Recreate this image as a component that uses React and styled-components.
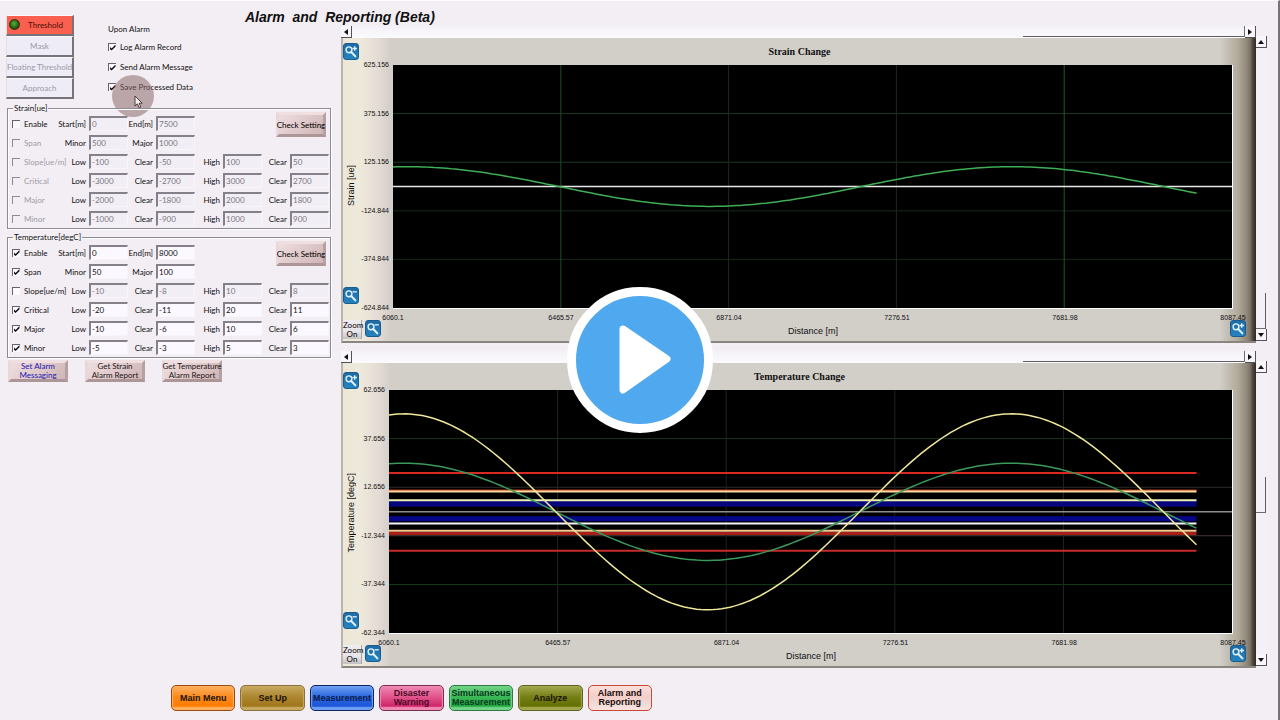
import React from "react";
import styled, { createGlobalStyle, css } from "styled-components";

const GlobalStyle = createGlobalStyle`
  *, *::before, *::after { box-sizing: border-box; }
  body { margin: 0; background: #f3edf4; color: #111; }
  body, button, input { font-family: Lato, "Liberation Sans", Arial, sans-serif; font-size: 8px; }
  button { cursor: pointer; }
`;

/* ---------- page frame ---------- */

const Page = styled.div`
  position: relative;
  min-height: 100vh;
  border-top: 1px solid #fff;
  border-right: 2px solid #77717a;
  padding-right: 10px;
`;

const Main = styled.main`
  display: grid;
  grid-template-columns: 341px minmax(0, 1fr);
  grid-template-rows: 25px auto;
`;

const PageTitle = styled.h1`
  grid-area: 1 / 1 / 2 / 3;
  margin: 0;
  padding: 6px 0 0 245px;
  font: italic bold 14px/20px "Liberation Sans", Arial, sans-serif;
  white-space: pre;
`;

const Sidebar = styled.aside`
  grid-area: 1 / 1 / 3 / 2;
  padding: 14px 10px 0 6px;
`;

const Charts = styled.section`
  grid-area: 2 / 2 / 3 / 3;
  display: flex;
  flex-direction: column;
  gap: 8px;
`;

/* ---------- sidebar ---------- */

const TopBlock = styled.div`
  display: flex;
  gap: 34px;
  position: relative;
`;

const Modes = styled.div`
  display: flex;
  flex-direction: column;
  width: 68px;
`;

const ModeButton = styled.button`
  display: flex;
  align-items: center;
  justify-content: center;
  position: relative;
  height: 21px;
  padding: 0;
  border: solid;
  border-width: 1px 2px 2px 1px;
  border-color: #fbf8fc #77737a #77737a #e4dfe8;
  background: ${(p) => (p.$active ? "#f9604f" : "#eeedf7")};
  color: ${(p) => (p.$active ? "#4a0d08" : "#9a9aa6")};
  padding-left: ${(p) => (p.$active ? "12px" : "0")};
  white-space: nowrap;
`;

const Led = styled.span`
  position: absolute;
  left: 2px;
  top: 3px;
  width: 11px;
  height: 11px;
  border-radius: 50%;
  border: 1px solid #3a2412;
  background: radial-gradient(circle at 45% 40%, #5fae3a, #1e6212 60%, #123a0a);
`;

const Options = styled.div`
  display: flex;
  flex-direction: column;
  padding-top: 8px;
`;

const OptionsTitle = styled.div`
  line-height: 12px;
  margin-bottom: 2px;
`;

const CheckLabel = styled.label`
  display: flex;
  align-items: center;
  gap: 4px;
  height: ${(p) => (p.$wide ? "20px" : "19px")};
  white-space: nowrap;
  color: ${(p) => (p.$muted ? "#a09ca4" : "#111")};
`;

const Check = styled.input.attrs({ type: "checkbox" })`
  appearance: none;
  flex: none;
  display: grid;
  place-items: center;
  width: 8px;
  height: 8px;
  margin: 0;
  background: #fcfaff;
  border: solid;
  border-width: 1px 0 0 1px;
  border-color: #66626a;
  &:disabled { background: transparent; border-color: #8d8a92; }
  &:checked::before {
    content: "";
    width: 6px;
    height: 6px;
    background: #111;
    clip-path: polygon(0 35%, 35% 65%, 100% 0, 100% 38%, 35% 100%, 0 70%);
  }
`;

const Pointer = styled.div`
  position: absolute;
  left: 106px;
  top: 60px;
  width: 42px;
  height: 42px;
  border-radius: 50%;
  background: rgba(135, 100, 100, 0.52);
  pointer-events: none;
  svg { position: absolute; left: 22px; top: 20px; }
`;

const Group = styled.fieldset`
  position: relative;
  margin: ${(p) => (p.$first ? "4px" : "3px")} 0 0 1px;
  padding: 1px 0 0 4px;
  min-width: 0;
  border: 1px solid #8e8a92;
  box-shadow: inset 1px 1px 0 #fff, 1px 1px 0 #fff;
`;

const GroupTitle = styled.legend`
  margin-left: 1px;
  padding: 0 1px;
  line-height: 10px;
`;

const GroupTop = styled.div`
  display: flex;
  justify-content: space-between;
  padding-right: 4px;
`;

const Row = styled.div`
  display: flex;
  align-items: center;
  height: 19px;
`;

const RowName = styled.div`
  width: 49px;
  flex: none;
`;

const Field = styled.label`
  display: flex;
  align-items: center;
  justify-content: flex-end;
  gap: 3px;
  width: 67px;
  white-space: nowrap;
`;

const Value = styled.input`
  flex: none;
  width: 39px;
  height: 15px;
  padding: 0 0 0 1px;
  color: #111;
  background: #fbf9ff;
  border: solid;
  border-width: 2px 1px 1px 2px;
  border-color: #85818a #f8f5fa #f8f5fa #85818a;
  border-radius: 0;
  &:disabled { color: #7b7780; background: #f2eef5; }
`;

const bevel = css`
  border: 3px solid;
  border-color: #efdfe1 #b5a0a2 #ac9698 #e9d8da;
  background: linear-gradient(135deg, #eedddf, #dcc5c6 60%, #cfb6b7);
`;

const CheckSetting = styled.button`
  ${bevel}
  width: 50px;
  height: 25px;
  padding: 0;
  margin-top: -2px;
  white-space: nowrap;
  display: flex;
  align-items: center;
  justify-content: center;
`;

const Actions = styled.div`
  display: flex;
  gap: 17px;
  padding: 2px 0 0 2px;
`;

const ActionButton = styled.button`
  ${bevel}
  display: flex;
  align-items: center;
  justify-content: center;
  width: 60px;
  height: 22px;
  padding: 0;
  line-height: 9px;
  white-space: pre;
  color: ${(p) => (p.$linked ? "#1c16b0" : "#1d1416")};
`;

/* ---------- chart panels ---------- */

const Panel = styled.article`
  display: grid;
  grid-template-columns: minmax(0, 1fr) 12px;
  grid-template-rows: 12px auto;
`;

const HScroll = styled.div`
  grid-area: 1 / 1 / 2 / 2;
  display: flex;
  justify-content: space-between;
  background: linear-gradient(#f3f1f7, #fbfafd);
`;

const HThumb = styled.div`
  width: 222px;
  height: 11px;
  margin-left: auto;
  border-bottom: 1px solid #5f5b63;
  border-right: 1px solid #6f6b73;
`;

const VScroll = styled.div`
  grid-area: 2 / 2 / 3 / 3;
  display: flex;
  flex-direction: column;
  margin: -2px 0 2px;
  background: #f3f0f7;
`;

const VThumb = styled.div`
  height: 36px;
  width: 10px;
  margin-top: ${(p) => (p.$end ? "auto" : "104px")};
  margin-bottom: ${(p) => (p.$end ? "0" : "auto")};
  border-right: 1px solid #5f5b63;
  border-bottom: 1px solid #6f6b73;
`;

const Arrow = styled.button`
  flex: none;
  display: grid;
  place-items: center;
  width: 11px;
  height: 12px;
  padding: 0;
  background: #f8f6fa;
  border: solid;
  border-width: 0 1px 1px 0;
  border-color: #55515a;
`;

const Graph = styled.div`
  grid-area: 2 / 1 / 3 / 2;
  display: grid;
  grid-template-columns: ${(p) => p.$gutter}px minmax(0, 1fr) 23px;
  grid-template-rows: 27px 243px 33px;
  border-bottom: 2px solid #8b857f;
  border-left: 2px solid #b9b4ab;
  background:
    linear-gradient(90deg, #ece7d8 0, #eeeadb 16px, #e5dcd5 34px, #d3cec8 48px, rgba(211, 206, 200, 0) 70px),
    linear-gradient(270deg, #2f2a22 0, #4b453a 3px, #7c7467 6px, #8f8778 9px, #b1aa9a 18px, rgba(210, 206, 198, 0) 36px),
    #d2cec8;
`;

const GraphTitle = styled.h2`
  grid-area: 1 / 1 / 2 / 4;
  margin: 0;
  padding-top: 8px;
  text-align: center;
  font: bold 10px/12px "Liberation Serif", "Times New Roman", serif;
`;

const AxisTools = styled.div`
  grid-area: 1 / 1 / 3 / 2;
  display: flex;
  flex-direction: column;
  justify-content: space-between;
  width: 17px;
  padding: ${(p) => (p.$low ? "9px" : "5px")} 0 4px;
`;

const YTitle = styled.div`
  align-self: center;
  padding-bottom: 24px;
  writing-mode: vertical-rl;
  transform: rotate(180deg);
  font: 9px/11px "Liberation Sans", Arial, sans-serif;
  white-space: nowrap;
`;

const YAxis = styled.div`
  grid-area: 2 / 1 / 3 / 2;
  justify-self: end;
  display: flex;
  flex-direction: column;
  justify-content: space-between;
  margin: -5px 4px -5px 0;
  text-align: right;
  font: 7px/10px "Liberation Sans", Arial, sans-serif;
`;

const Plot = styled.svg`
  grid-area: 2 / 2 / 3 / 3;
  display: block;
  width: 100%;
  height: 244px;
  background: #000;
  border-right: 1px solid #fff;
  border-bottom: 1px solid #fff;
`;

const XAxis = styled.div`
  grid-area: 3 / 2 / 4 / 3;
  min-width: 0;
`;

const XTicks = styled.div`
  display: flex;
  justify-content: space-between;
  margin: 5px -20px 0;
  font: 7px/9px "Liberation Sans", Arial, sans-serif;
  span { width: 40px; text-align: center; }
`;

const XTitle = styled.div`
  margin-top: 4px;
  text-align: center;
  font: 9px/11px "Liberation Sans", Arial, sans-serif;
`;

const BottomTools = styled.div`
  grid-area: 3 / 1 / 4 / 4;
  display: flex;
  align-items: flex-start;
  gap: 3px;
  padding: 12px 10px 0 0;
`;

const ZoomToggle = styled.button`
  width: 19px;
  height: 19px;
  padding: 0;
  border: 0;
  border-right: 1px solid #aaa6a6;
  background: linear-gradient(#f0edf1, #e8e5e9 60%, #c5c0c2);
  line-height: 9px;
  white-space: pre;
`;

const ZoomButton = styled.button`
  flex: none;
  width: 16px;
  height: 17px;
  padding: 0;
  border: 1px solid #1b5c8f;
  border-radius: 3px;
  background: linear-gradient(#1f6ba5, #2583c0);
  margin-left: ${(p) => (p.$end ? "auto" : "0")};
  svg { display: block; }
`;

/* ---------- bottom navigation ---------- */

const Nav = styled.nav`
  display: grid;
  grid-template-columns: repeat(7, 1fr);
  gap: 5px;
  width: 481px;
  margin: 17px 0 9px 171px;
`;

const NavButton = styled.button`
  height: 26px;
  padding: 0;
  border: 1px solid ${(p) => p.$edge};
  border-radius: 5px;
  background: linear-gradient(${(p) => p.$top}, ${(p) => p.$mid} 45%, ${(p) => p.$low} 84%, ${(p) => p.$top} 90%);
  box-shadow: inset 0 0 1px 1px ${(p) => p.$top};
  font: bold 9px/9px "Liberation Sans", Arial, sans-serif;
  color: ${(p) => p.$ink || "#1a1208"};
  white-space: pre;
`;

/* ---------- video overlay ---------- */

const PlayButton = styled.button`
  position: absolute;
  left: 50%;
  top: 50%;
  width: 146px;
  height: 146px;
  margin: -74px 0 0 -72px;
  padding: 0;
  border: 9px solid #fff;
  border-radius: 50%;
  background: #50a9ef;
  svg { display: block; width: 100%; height: 100%; }
`;

/* ---------- data ---------- */

const STRAIN = {
  title: "Strain[ue]",
  off: true,
  top: [
    { name: "Enable", on: false, fields: [["Start[m]", "0"], ["End[m]", "7500"]] },
    { name: "Span", on: false, muted: true, fields: [["Minor", "500"], ["Major", "1000"]] },
  ],
  rows: [
    { name: "Slope[ue/m]", values: ["-100", "-50", "100", "50"], muted: true },
    { name: "Critical", values: ["-3000", "-2700", "3000", "2700"], muted: true },
    { name: "Major", values: ["-2000", "-1800", "2000", "1800"], muted: true },
    { name: "Minor", values: ["-1000", "-900", "1000", "900"], muted: true },
  ],
};

const TEMPERATURE = {
  title: "Temperature[degC]",
  top: [
    { name: "Enable", on: true, fields: [["Start[m]", "0"], ["End[m]", "8000"]] },
    { name: "Span", on: true, fields: [["Minor", "50"], ["Major", "100"]] },
  ],
  rows: [
    { name: "Slope[ue/m]", values: ["-10", "-8", "10", "8"], off: true },
    { name: "Critical", values: ["-20", "-11", "20", "11"], on: true },
    { name: "Major", values: ["-10", "-6", "10", "6"], on: true },
    { name: "Minor", values: ["-5", "-3", "5", "3"], on: true },
  ],
};

const X_TICKS = ["6060.1", "6465.57", "6871.04", "7276.51", "7681.98", "8087.45"];
const X_MIN = 6060.1;
const X_MAX = 8087.45;
const X_END = 8002;
const W = 840;
const H = 243;

const STRAIN_CHART = {
  title: "Strain Change",
  yTitle: "Strain [ue]",
  yTicks: ["625.156", "375.156", "125.156", "-124.844", "-374.844", "-624.844"],
  range: [-624.844, 625.156],
  gutter: 50,
  grid: ["#1c3a22", "#1c3a22", "#152a18", "#152a18"],
  vGrid: ["#1c4a26", "#1a2a1c", "#1a2a1c", "#1c5a2a"],
  zero: "#e8e8e8",
  limits: [],
  waves: [{ amp: 102, color: "#3fae55" }],
};

const TEMP_CHART = {
  title: "Temperature Change",
  yTitle: "Temperature [degC]",
  yTicks: ["62.656", "37.656", "12.656", "-12.344", "-37.344", "-62.344"],
  range: [-62.344, 62.656],
  gutter: 46,
  grid: ["#0d3312", "#2a2a2a", "#4a3a3a", "#0d3a12"],
  vGrid: ["#242424", "#202020", "#202020", "#242424"],
  zero: "#8f8f8f",
  limits: [
    { at: 4.2, color: "#05057c", w: 6 },
    { at: -3.6, color: "#05058a", w: 5 },
    { at: 20, color: "#d92a22", w: 2 },
    { at: -20, color: "#c92a2a", w: 2 },
    { at: 11, color: "#b8381a", w: 2 },
    { at: 10.4, color: "#ffd9a0", w: 2 },
    { at: -11.2, color: "#a81e18", w: 3 },
    { at: -9.8, color: "#f5c890", w: 2 },
    { at: 6, color: "#eef0b0", w: 2 },
    { at: -6, color: "#f4f4ff", w: 2 },
  ],
  waves: [
    { amp: 25, color: "#3a9a5c" },
    { amp: 50.4, color: "#efe79a" },
  ],
  thumbMiddle: true,
};

const NAV = [
  { text: "Main Menu", top: "#ffb060", mid: "#fb8a1c", low: "#ff7c00", edge: "#9c4a10" },
  { text: "Set Up", top: "#c8ab62", mid: "#ad8630", low: "#a0761c", edge: "#8a7040" },
  { text: "Measurement", top: "#6da0f5", mid: "#2c68dd", low: "#1c55d8", edge: "#12245c", ink: "#0a1a4c" },
  { text: "Disaster\nWarning", top: "#f08ab4", mid: "#e0558c", low: "#cf2468", edge: "#74304c", ink: "#4c0a26" },
  { text: "Simultaneous\nMeasurement", top: "#74d488", mid: "#3cb858", low: "#1fa541", edge: "#2e7a42", ink: "#06381a" },
  { text: "Analyze", top: "#a3a850", mid: "#748016", low: "#646f00", edge: "#5c6420" },
  { text: "Alarm and\nReporting", top: "#fbe0dc", mid: "#f3cdc8", low: "#efdedb", edge: "#c4483c", ink: "#200c0a" },
];

/* ---------- components ---------- */

function FieldGroup({ group, first }) {
  const labels = ["Low", "Clear", "High", "Clear"];
  return (
    <Group $first={first}>
      <GroupTitle>{group.title}</GroupTitle>
      <GroupTop>
        <div>
          {group.top.map((r) => (
            <Row key={r.name}>
              <RowName>
                <CheckLabel $muted={r.muted}>
                  <Check defaultChecked={r.on} disabled={r.muted} />
                  {r.name}
                </CheckLabel>
              </RowName>
              {r.fields.map(([label, value]) => (
                <Field key={label}>
                  {label}
                  <Value defaultValue={value} disabled={group.off} />
                </Field>
              ))}
            </Row>
          ))}
        </div>
        <CheckSetting type="button">Check Setting</CheckSetting>
      </GroupTop>
      {group.rows.map((r) => (
        <Row key={r.name}>
          <RowName>
            <CheckLabel $muted={r.muted}>
              <Check defaultChecked={r.on} disabled={r.muted} />
              {r.name}
            </CheckLabel>
          </RowName>
          {r.values.map((value, i) => (
            <Field key={i}>
              {labels[i]}
              <Value defaultValue={value} disabled={group.off || r.off} />
            </Field>
          ))}
        </Row>
      ))}
    </Group>
  );
}

function ScrollArrow({ dir }) {
  const shapes = {
    left: "M5 0 L1 3 L5 6 Z",
    right: "M1 0 L5 3 L1 6 Z",
    up: "M0 5 L3 1 L6 5 Z",
    down: "M0 1 L3 5 L6 1 Z",
  };
  return (
    <Arrow type="button" aria-label={`Scroll ${dir}`}>
      <svg width="6" height="6" viewBox="0 0 6 6"><path d={shapes[dir]} fill="#111" /></svg>
    </Arrow>
  );
}

function Zoom({ plus, end }) {
  return (
    <ZoomButton type="button" $end={end} aria-label={plus ? "Zoom in" : "Zoom out"}>
      <svg width="14" height="15" viewBox="0 0 14 15" fill="none" stroke="#e4f4ff">
        <circle cx="5" cy="5.8" r="2.9" strokeWidth="1.4" />
        <path d="M7.2 8 L11.4 12.4" strokeWidth="2" strokeLinecap="round" />
        <path d={plus ? "M8.5 4.5 H13 M10.7 2.3 V6.7" : "M8.6 3.8 H12.8"} strokeWidth="1.3" />
      </svg>
    </ZoomButton>
  );
}

function Chart({ chart }) {
  const [lo, hi] = chart.range;
  const px = (x) => ((x - X_MIN) / (X_MAX - X_MIN)) * W;
  const py = (y) => ((hi - y) / (hi - lo)) * H;
  const wave = (amp) => {
    const points = [];
    for (let x = X_MIN; x < X_END; x += 10) points.push(x);
    points.push(X_END);
    return points
      .map((x) => `${px(x).toFixed(1)},${py(amp * Math.cos(((x - 6096) / 1461) * 2 * Math.PI)).toFixed(1)}`)
      .join(" ");
  };
  return (
    <Panel>
      <HScroll>
        <ScrollArrow dir="left" />
        <HThumb />
        <ScrollArrow dir="right" />
      </HScroll>
      <Graph $gutter={chart.gutter}>
        <GraphTitle>{chart.title}</GraphTitle>
        <AxisTools $low={chart.thumbMiddle}>
          <Zoom plus />
          <YTitle>{chart.yTitle}</YTitle>
          <Zoom />
        </AxisTools>
        <YAxis>
          {chart.yTicks.map((t) => <span key={t}>{t}</span>)}
        </YAxis>
        <Plot viewBox={`0 0 ${W} ${H}`} preserveAspectRatio="none" role="img" aria-label={chart.title}>
          {chart.grid.map((color, i) => (
            <line key={i} x1="0" x2={W} y1={(H * (i + 1)) / 5} y2={(H * (i + 1)) / 5} stroke={color} />
          ))}
          {chart.vGrid.map((color, i) => (
            <line key={i} y1="0" y2={H} x1={(W * (i + 1)) / 5} x2={(W * (i + 1)) / 5} stroke={color} />
          ))}
          {chart.limits.map((l) => (
            <line key={l.at} x1="0" x2={px(X_END)} y1={py(l.at)} y2={py(l.at)} stroke={l.color} strokeWidth={l.w} />
          ))}
          <line x1="0" x2={W} y1={py(0)} y2={py(0)} stroke={chart.zero} strokeWidth="1.4" />
          {chart.waves.map((w) => (
            <polyline key={w.amp} points={wave(w.amp)} fill="none" stroke={w.color} strokeWidth="1.5" />
          ))}
        </Plot>
        <XAxis>
          <XTicks>
            {X_TICKS.map((t) => <span key={t}>{t}</span>)}
          </XTicks>
          <XTitle>Distance [m]</XTitle>
        </XAxis>
        <BottomTools>
          <ZoomToggle type="button">{"Zoom\nOn"}</ZoomToggle>
          <Zoom />
          <Zoom plus end />
        </BottomTools>
      </Graph>
      <VScroll>
        <ScrollArrow dir="up" />
        <VThumb $end={!chart.thumbMiddle} />
        <ScrollArrow dir="down" />
      </VScroll>
    </Panel>
  );
}

export default function App() {
  return (
    <Page>
      <GlobalStyle />
      <Main>
        <PageTitle>{"Alarm  and  Reporting (Beta)"}</PageTitle>
        <Sidebar>
          <TopBlock>
            <Modes>
              <ModeButton type="button" $active><Led />Threshold</ModeButton>
              <ModeButton type="button">Mask</ModeButton>
              <ModeButton type="button">Floating Threshold</ModeButton>
              <ModeButton type="button">Approach</ModeButton>
            </Modes>
            <Options>
              <OptionsTitle>Upon Alarm</OptionsTitle>
              {["Log Alarm Record", "Send Alarm Message", "Save Processed Data"].map((text) => (
                <CheckLabel key={text} $wide>
                  <Check defaultChecked />
                  {text}
                </CheckLabel>
              ))}
            </Options>
            <Pointer>
              <svg width="9" height="14" viewBox="0 0 9 14">
                <path d="M1 1 V11 L3.4 8.8 L5.2 12.8 L6.8 12 L5.2 8.2 H8.2 Z" fill="#f4eeee" stroke="#3c2c2c" strokeWidth="0.9" />
              </svg>
            </Pointer>
          </TopBlock>
          <FieldGroup group={STRAIN} first />
          <FieldGroup group={TEMPERATURE} />
          <Actions>
            <ActionButton type="button" $linked>{"Set Alarm\nMessaging"}</ActionButton>
            <ActionButton type="button">{"Get Strain\nAlarm Report"}</ActionButton>
            <ActionButton type="button">{"Get Temperature\nAlarm Report"}</ActionButton>
          </Actions>
        </Sidebar>
        <Charts>
          <Chart chart={STRAIN_CHART} />
          <Chart chart={TEMP_CHART} />
        </Charts>
      </Main>
      <Nav>
        {NAV.map((n) => (
          <NavButton key={n.text} type="button" $top={n.top} $mid={n.mid} $low={n.low} $edge={n.edge} $ink={n.ink}>
            {n.text}
          </NavButton>
        ))}
      </Nav>
      <PlayButton type="button" aria-label="Play">
        <svg viewBox="0 0 128 128">
          <path d="M47 33 L91 63 L47 94 Z" fill="#fff" stroke="#fff" strokeWidth="7" strokeLinejoin="round" />
        </svg>
      </PlayButton>
    </Page>
  );
}
